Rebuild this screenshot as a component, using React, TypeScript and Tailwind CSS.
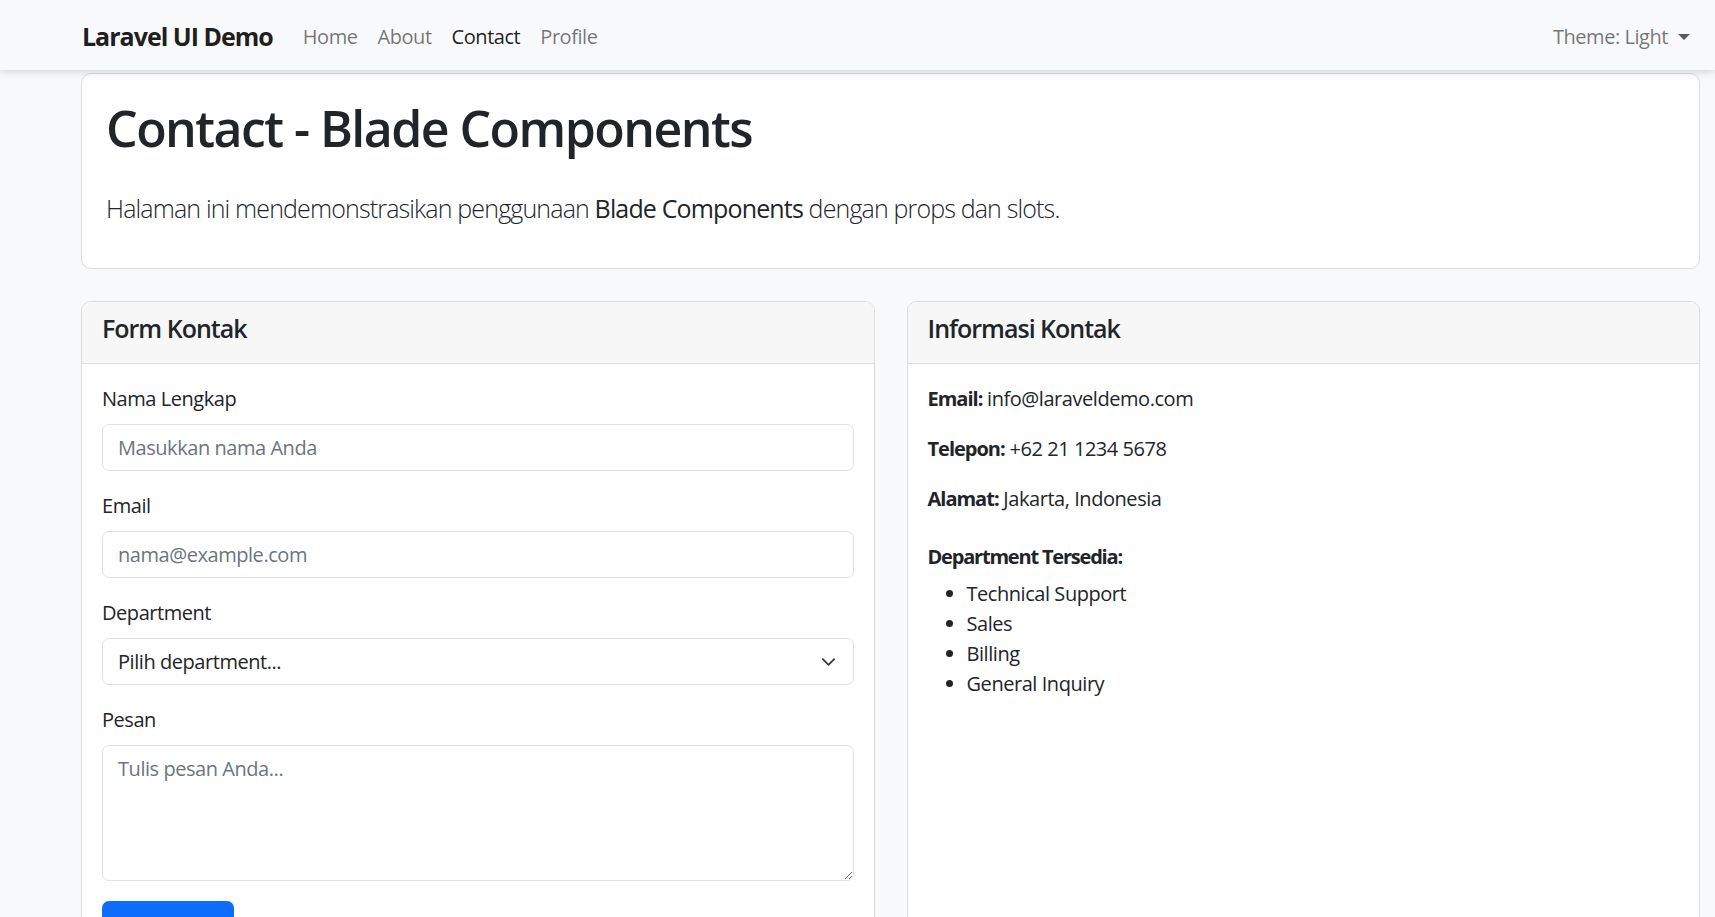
import React from 'react';

const links = ['Home', 'About', 'Contact', 'Profile'];
const departments = ['Technical Support', 'Sales', 'Billing', 'General Inquiry'];

const Field: React.FC<{ label: string; children: React.ReactNode }> = ({ label, children }) => (
  <div className="mb-[20px]">
    <label className="block text-[20px] leading-[30px] mb-[10px] text-[#212529]">{label}</label>
    {children}
  </div>
);

const CardHeader: React.FC<{ title: string }> = ({ title }) => (
  <div className="h-[62px] bg-[#f7f7f7] border-b border-[#dcdcdc] px-[20px] pt-[11px]">
    <h5 className="text-[25px] leading-[30px] font-semibold tracking-[-0.04em]">{title}</h5>
  </div>
);

export default function App() {
  return (
    <div className="min-h-screen bg-[#f8f9fa] text-[#212529] tracking-[-0.028em]" style={{ fontFamily: '"Open Sans", "Noto Sans", sans-serif' }}>
      <nav className="relative z-10 h-[70px] bg-[#f8f9fa] shadow-[0_2px_8px_rgba(0,0,0,0.15)] flex items-center pt-[3px] pl-[82px] pr-[25px]">
        <span className="text-[25px] font-bold text-black/90 mr-[20px] tracking-[-0.04em]">Laravel UI Demo</span>
        <div className="flex">
          {links.map(l => (
            <a key={l} className={`px-[10px] text-[20px] ${l === 'Contact' ? 'text-black/90' : 'text-black/55'}`}>{l}</a>
          ))}
        </div>
        <div className="ml-auto flex items-center text-[20px] text-black/55">
          Theme: Light
          <span className="ml-[10px] w-0 h-0 border-l-[6px] border-r-[6px] border-t-[6px] border-l-transparent border-r-transparent border-t-[#595959]" />
        </div>
      </nav>

      <main className="pl-[81px] pr-[15px] pt-[3px]">
        <section className="bg-white border border-[#dcdcdc] rounded-[10px] px-[24px] pt-[24px] pb-[24px]">
          <h1 className="text-[50px] leading-[60px] font-semibold mb-[31px] tracking-[-0.031em]">Contact - Blade Components</h1>
          <p className="text-[25px] leading-[38px] font-light mb-[17px] tracking-[-0.034em]">
            Halaman ini mendemonstrasikan penggunaan <strong className="font-normal">Blade Components</strong> dengan props dan slots.
          </p>
        </section>

        <div className="grid grid-cols-2 gap-[32px] mt-[32px]">
          <div className="bg-white border border-[#dcdcdc] rounded-[10px] overflow-hidden">
            <CardHeader title="Form Kontak" />
            <div className="p-[20px]">
              <Field label="Nama Lengkap">
                <input placeholder="Masukkan nama Anda" className="w-full h-[47px] px-[15px] text-[20px] border border-[#dee2e6] rounded-[7px] placeholder:text-[#6c757d] outline-none" />
              </Field>
              <Field label="Email">
                <input placeholder="nama@example.com" className="w-full h-[47px] px-[15px] text-[20px] border border-[#dee2e6] rounded-[7px] placeholder:text-[#6c757d] outline-none" />
              </Field>
              <Field label="Department">
                <div className="relative h-[47px] px-[15px] border border-[#dee2e6] rounded-[7px] flex items-center text-[20px]">
                  Pilih department...
                  <svg className="absolute right-[17px] top-1/2 -translate-y-1/2" width="15" height="15" viewBox="0 0 16 16" fill="none" stroke="#343a40" strokeWidth="2" strokeLinecap="round" strokeLinejoin="round">
                    <path d="m2 5 6 6 6-6" />
                  </svg>
                </div>
              </Field>
              <Field label="Pesan">
                <textarea placeholder="Tulis pesan Anda..." className="block w-full h-[136px] px-[15px] py-[8px] text-[20px] border border-[#dee2e6] rounded-[7px] placeholder:text-[#6c757d] outline-none resize-y" />
              </Field>
              <button className="w-[132px] h-[47px] bg-[#0d6efd] rounded-[7px]" aria-label="Kirim" />
            </div>
          </div>

          <div className="bg-white border border-[#dcdcdc] rounded-[10px] overflow-hidden">
            <CardHeader title="Informasi Kontak" />
            <div className="p-[20px] text-[20px] leading-[30px]">
              <p className="mb-[20px]"><strong className="font-bold tracking-[-0.05em]">Email:</strong> info@laraveldemo.com</p>
              <p className="mb-[20px]"><strong className="font-bold tracking-[-0.05em]">Telepon:</strong> +62 21 1234 5678</p>
              <p className="mb-[31px]"><strong className="font-bold tracking-[-0.05em]">Alamat:</strong> Jakarta, Indonesia</p>
              <h6 className="font-bold leading-[24px] mb-[10px] tracking-[-0.06em]">Department Tersedia:</h6>
              <ul className="list-disc pl-[39px]">
                {departments.map(d => (
                  <li key={d}>{d}</li>
                ))}
              </ul>
            </div>
          </div>
        </div>
      </main>
    </div>
  );
}
